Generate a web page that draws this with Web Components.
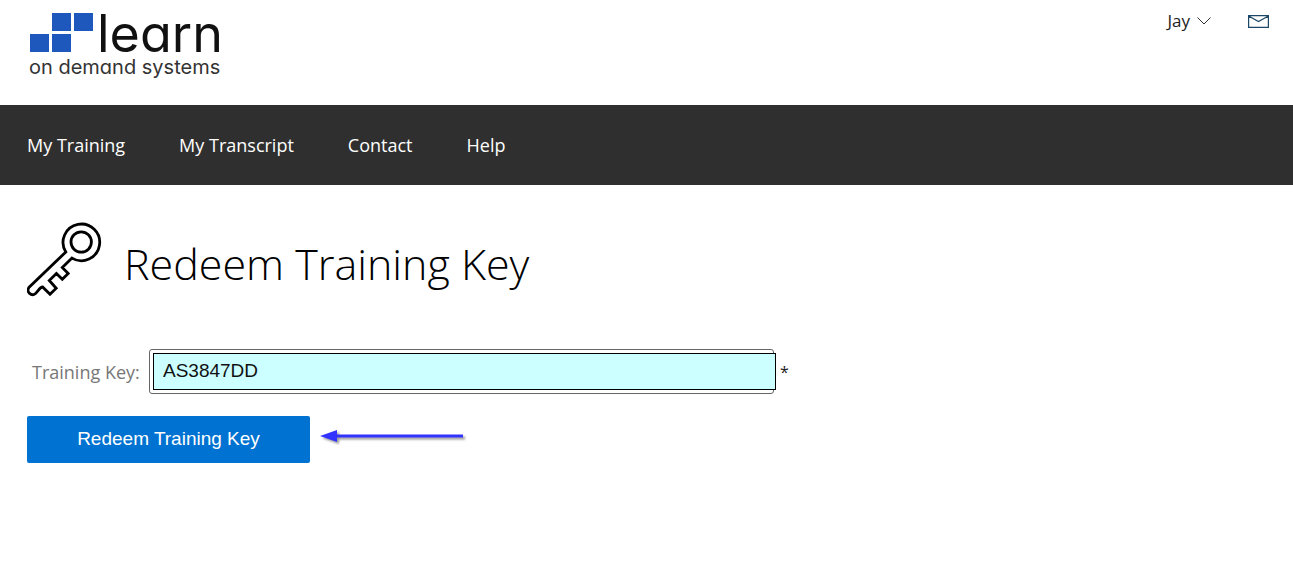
<!DOCTYPE html>
<html lang="en">
<head>
<meta charset="utf-8">
<title>Redeem Training Key</title>
<style>
  body { margin: 0; background: #fff; color: #111; font: 18px/24px "Open Sans", "Noto Sans", sans-serif; }
</style>
</head>
<body>
<training-page>
  <site-header slot="header">
    <site-logo></site-logo>
    <account-bar name="Jay"></account-bar>
  </site-header>
  <site-nav slot="nav">
    <nav-item>My Training</nav-item>
    <nav-item>My Transcript</nav-item>
    <nav-item>Contact</nav-item>
    <nav-item>Help</nav-item>
  </site-nav>
  <page-title>Redeem Training Key</page-title>
  <key-form value="AS3847DD"></key-form>
</training-page>

<script>
  const define = (name, markup, setup) => customElements.define(name, class extends HTMLElement {
    constructor() {
      super();
      this.attachShadow({ mode: 'open' }).innerHTML = markup;
    }
    connectedCallback() { if (setup) setup(this, this.shadowRoot); }
  });

  define('training-page', `
    <style>
      :host { display: block; }
      main { padding: 37px 27px; }
    </style>
    <slot name="header"></slot>
    <slot name="nav"></slot>
    <main><slot></slot></main>`);

  define('site-header', `
    <style>
      :host { display: block; }
      header { display: flex; justify-content: space-between; align-items: flex-start; box-sizing: border-box; min-height: 105px; padding: 9px 24px 0 29px; }
    </style>
    <header><slot></slot></header>`);

  define('site-logo', `
    <style>
      :host { display: block; font-family: Inter, "Open Sans", sans-serif; font-feature-settings: "cv11"; white-space: nowrap; }
      a { display: block; color: #111; text-decoration: none; }
      .top { display: flex; align-items: flex-start; gap: 4px; height: 46px; }
      svg { display: block; margin-top: 4px; }
      .name { font-size: 52px; line-height: 50px; font-weight: 400; }
      .tag { display: block; font-size: 20px; line-height: 24px; font-weight: 400; color: #333; }
    </style>
    <a href="#" aria-label="learn on demand systems">
      <span class="top">
        <svg width="64" height="40" viewBox="0 0 64 40" fill="#1f58bd" aria-hidden="true">
          <rect x="23" width="19" height="18"/><rect x="45" width="19" height="18"/>
          <rect x="1" y="21" width="19" height="18"/><rect x="23" y="21" width="19" height="18"/>
        </svg>
        <span class="name">learn</span>
      </span>
      <span class="tag">on demand systems</span>
    </a>`);

  define('account-bar', `
    <style>
      :host { display: flex; align-items: center; gap: 37px; }
      button { display: flex; align-items: center; gap: 7px; padding: 0; border: 0; background: none; color: #222; font: 17px/24px "Open Sans", sans-serif; }
      svg { display: block; fill: none; }
      a { display: block; }
    </style>
    <button type="button"><span id="name"></span>
      <svg width="14" height="10" viewBox="0 0 14 10" stroke="#333" aria-hidden="true"><path d="M.5 1.500 7 8l6.500-6.500"/></svg>
    </button>
    <a href="#" aria-label="Messages">
      <svg width="21" height="13" viewBox="0 0 21 13" stroke="#1d4766" stroke-width="1.200" aria-hidden="true"><path d="M.6.600h19.800v11.800H.6zM1 1.300 10.500 6.500 20 1.300"/></svg>
    </a>`, (host, root) => { root.getElementById('name').textContent = host.getAttribute('name'); });

  define('site-nav', `
    <style>
      :host { display: block; background: #2f2f2f; color: #fff; }
      nav { display: flex; flex-wrap: wrap; align-items: center; gap: 0 54px; min-height: 80px; padding: 0 27px; }
    </style>
    <nav><slot></slot></nav>`);

  define('nav-item', `
    <style>
      :host { display: block; }
      a { color: inherit; text-decoration: none; font-size: 18px; line-height: 24px; }
    </style>
    <a href="#"><slot></slot></a>`);

  define('page-title', `
    <style>
      :host { display: flex; align-items: center; gap: 22px; }
      svg { display: block; flex: none; }
      h1 { margin: 0; padding-top: 8px; font-size: 43px; line-height: 60px; font-weight: 300; color: #000; }
    </style>
    <svg width="75" height="75" viewBox="12 12 75 75" fill="none" stroke="#000" stroke-width="2.800" aria-hidden="true">
      <circle cx="66.200" cy="32" r="10.200"/>
      <path d="M50.800 42A18.300 18.300 0 1 1 57 48.100L47.300 57.600 53.200 63.500 47.300 69.300 41.400 63.400 34.300 70.500 41.200 78.200 35 84.200 27.600 77C25 77 23.500 80.500 20.500 83.500A4.500 4.500 0 0 1 13.900 77.500Z"/>
    </svg>
    <h1><slot></slot></h1>`);

  define('key-form', `
    <style>
      :host { display: block; margin-top: 52px; }
      .field { display: flex; align-items: center; }
      label { width: 122px; box-sizing: border-box; padding: 0 0 0 5px; color: #777; font-size: 18px; line-height: 24px; }
      .box { flex: 0 1 625px; box-sizing: border-box; height: 45px; padding: 3px 0 3px 3px; border: 1px solid #666; border-radius: 3px; }
      input { display: block; box-sizing: border-box; width: calc(100% + 3px); height: 37px; padding: 0 9px 2px; border: 1px solid #000; border-radius: 0; background: #cff; color: #111; font: 19px/24px "Liberation Sans", Arial, sans-serif; outline: 0; }
      .star { margin-left: 6px; color: #222; font-size: 16px; line-height: 24px; }
      .actions { display: flex; align-items: center; gap: 10px; margin-top: 22px; }
      button { width: 283px; height: 47px; padding: 0 0 2px; border: 0; border-radius: 2px; background: #0072d1; color: #fff; font: 19px/24px "Liberation Sans", Arial, sans-serif; }
      svg { display: block; margin-bottom: 8px; filter: drop-shadow(2px 2px 1px #0006); overflow: visible; }
    </style>
    <form>
      <div class="field">
        <label for="key">Training Key:</label>
        <div class="box"><input id="key" type="text" required></div>
        <span class="star">*</span>
      </div>
      <div class="actions">
        <button type="button">Redeem Training Key</button>
        <svg width="144" height="14" viewBox="0 0 144 14" fill="#33f" aria-hidden="true"><path d="M0 7 17 1v4.500H143v3H17V13z"/></svg>
      </div>
    </form>`, (host, root) => { root.getElementById('key').value = host.getAttribute('value'); });
</script>
</body>
</html>
